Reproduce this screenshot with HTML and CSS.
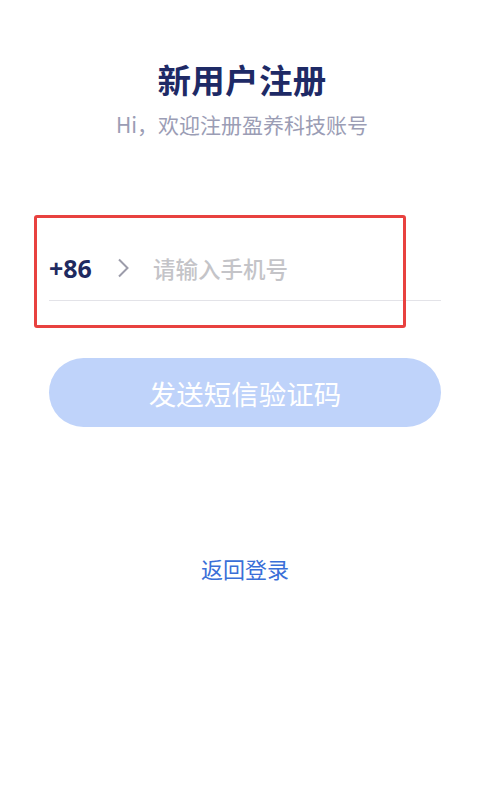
FILE: index.html
```html
<!DOCTYPE html>
<html lang="zh-CN">
<head>
<meta charset="utf-8">
<title>新用户注册</title>
<link rel="stylesheet" href="styles.css">
</head>
<body>
<main class="page">
  <header class="head">
    <h1 class="title">新用户注册</h1>
    <p class="subtitle">Hi，欢迎注册盈养科技账号</p>
  </header>
  <section class="form">
    <div class="field">
      <span class="code">+86</span>
      <svg class="chev" width="12" height="20" viewBox="0 0 12 20"><path d="M2 1.5 L10.5 10 L2 18.5" fill="none" stroke="#9c9caa" stroke-width="2"/></svg>
      <span class="placeholder">请输入手机号</span>
      <div class="highlight"></div>
    </div>
    <button class="send">发送短信验证码</button>
    <a class="back" href="#">返回登录</a>
  </section>
</main>
</body>
</html>
```
FILE: styles.css
```css
html, body { margin: 0; padding: 0; background: #fff; }
body { font-family: "Noto Sans CJK SC", "Noto Sans", sans-serif; width: 484px; height: 812px; overflow: hidden; }
.page { display: flex; flex-direction: column; }
.head { display: flex; flex-direction: column; align-items: center; padding-top: 59px; }
.title { margin: 0; font-size: 33.5px; line-height: 40px; font-weight: 700; color: #1e2a66; letter-spacing: 0.3px; }
.subtitle { margin: 11px 0 0; font-size: 21px; line-height: 28px; color: #9b9db5; }
.form { display: flex; flex-direction: column; margin: 0 43px 0 49px; padding-top: 97px; }
.field { position: relative; display: flex; align-items: center; height: 65px; border-bottom: 1px solid #e3e3e8; }
.code { font-family: "Noto Sans", sans-serif; font-weight: 700; font-size: 25px; color: #1f2a60; width: 68px; }
.chev { margin-right: 24px; }
.placeholder { font-size: 22.5px; color: #c4c4c8; font-weight: 500; }
.highlight { position: absolute; left: -15px; top: -20px; width: 372px; height: 113px; box-sizing: border-box; border: 3px solid #e8413f; border-radius: 3px; }
.send { margin-top: 57px; height: 69px; border: none; border-radius: 35px; background: #bfd3fa; color: #fff; font-family: "Noto Sans CJK SC", sans-serif; font-size: 27.5px; padding: 0; }
.back { align-self: center; margin-top: 126px; font-size: 22px; line-height: 30px; color: #3a6fd8; text-decoration: none; }
```
